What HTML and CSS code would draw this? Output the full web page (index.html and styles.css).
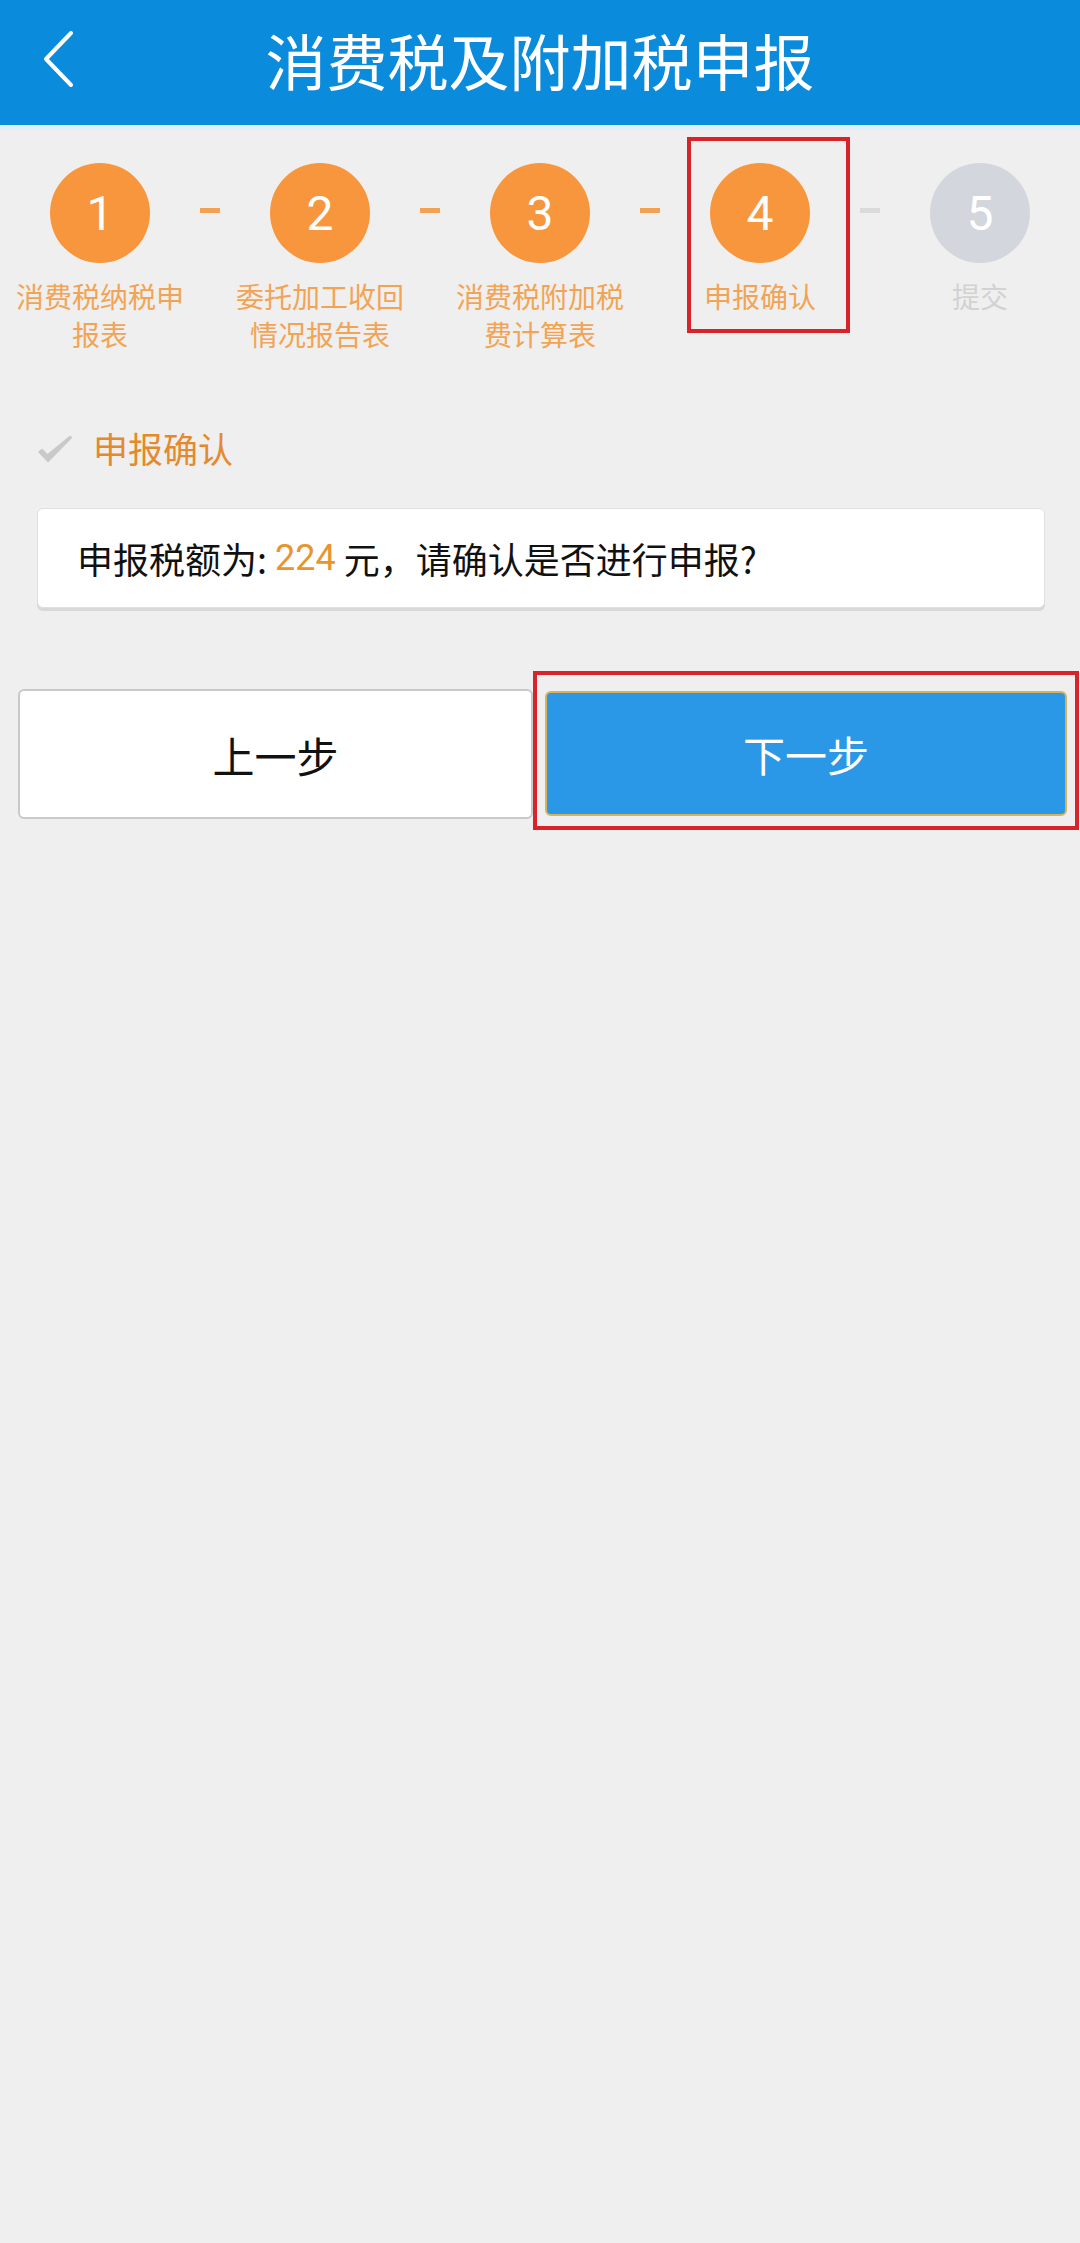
FILE: index.html
```html
<!DOCTYPE html>
<html lang="zh-CN">
<head>
<meta charset="utf-8">
<title>消费税及附加税申报</title>
<link rel="stylesheet" href="styles.css">
</head>
<body>
<header class="topbar">
  <div class="back">
    <svg width="32" height="58" viewBox="0 0 32 58"><polyline points="28,3 3,29 28,55" fill="none" stroke="#fff" stroke-width="4" stroke-linecap="round" stroke-linejoin="round"/></svg>
  </div>
  <h1 class="title">消费税及附加税申报</h1>
  <div></div>
</header>

<section class="steps">
  <div class="step done">
    <div class="circle">1</div>
    <div class="label">消费税纳税申报表</div>
  </div>
  <div class="dash done"></div>
  <div class="step done">
    <div class="circle">2</div>
    <div class="label">委托加工收回情况报告表</div>
  </div>
  <div class="dash done"></div>
  <div class="step done">
    <div class="circle">3</div>
    <div class="label">消费税附加税费计算表</div>
  </div>
  <div class="dash done"></div>
  <div class="step done current">
    <div class="circle">4</div>
    <div class="label">申报确认</div>
  </div>
  <div class="dash"></div>
  <div class="step">
    <div class="circle">5</div>
    <div class="label">提交</div>
  </div>
</section>

<div class="section-title">
  <svg class="check" width="36" height="28" viewBox="0 0 36 28"><path d="M1 17 L5 13.5 L10.5 19 L33 0.5 L35.5 2.5 L11 27.5 Z" fill="#c9c9c9"/></svg>
  <span>申报确认</span>
</div>

<div class="card">申报税额为: <span class="amount">224</span> 元，请确认是否进行申报?</div>

<div class="actions">
  <button class="btn prev">上一步</button>
  <div class="highlight">
    <button class="btn next">下一步</button>
  </div>
</div>
</body>
</html>
```

FILE: styles.css
```css
* { box-sizing: border-box; }
html, body { margin: 0; padding: 0; }
body {
  width: 1080px;
  min-height: 2243px;
  background: #efefef;
  font-family: "Noto Sans CJK SC", "Noto Sans", sans-serif;
}

.topbar {
  height: 130px;
  background: #0b8bdb;
  border-bottom: 5px solid #dcf0fb;
  display: grid;
  grid-template-columns: 1fr auto 1fr;
  align-items: center;
}
.back {
  padding-left: 43px;
  display: flex;
  align-items: center;
  height: 100%;
  padding-bottom: 8px;
}
.title {
  margin: 0;
  color: #fff;
  font-size: 61px;
  font-weight: 400;
  line-height: 1;
  padding-bottom: 6px;
}

.steps {
  display: flex;
  align-items: flex-start;
  padding-top: 33px;
}
.step {
  width: 200px;
  flex: none;
  display: flex;
  flex-direction: column;
  align-items: center;
  position: relative;
}
.circle {
  width: 100px;
  height: 100px;
  border-radius: 50%;
  background: #d3d6dc;
  color: #fff;
  font-family: Roboto, "Noto Sans", sans-serif;
  font-size: 48px;
  display: flex;
  align-items: center;
  justify-content: center;
}
.step.done .circle { background: #f7963c; }
.label {
  margin-top: 14px;
  width: 172px;
  text-align: center;
  font-size: 28px;
  line-height: 38px;
  color: #d2d2d2;
}
.step.done .label { color: #f2a454; }
.dash {
  flex: 1;
  height: 5px;
  margin-top: 45px;
  background: #dadada;
}
.dash.done { background: #f3a251; }
.step.current::after {
  content: "";
  box-sizing: border-box;
  position: absolute;
  left: 27px;
  top: -26px;
  width: 163px;
  height: 196px;
  border: 4px solid #d8232a;
}

.section-title {
  display: flex;
  align-items: center;
  gap: 20px;
  padding-left: 37px;
  margin-top: 70px;
  height: 50px;
}
.section-title span {
  font-size: 35px;
  color: #e4892d;
  line-height: 50px;
}
.check { margin-top: 2px; }

.card {
  margin: 35px 35px 0 37px;
  height: 100px;
  background: #fff;
  border: 1px solid #e0e0e0;
  border-radius: 6px;
  box-shadow: 0 3px 0 #d8d8d8;
  padding-left: 39px;
  display: flex;
  align-items: center;
  font-size: 36px;
  color: #111;
  white-space: pre;
}
.amount { color: #e8952f; font-family: Roboto, "Noto Sans CJK SC", sans-serif; }

.actions {
  display: flex;
  align-items: flex-start;
  padding-left: 18px;
  margin-top: 63px;
}
.btn {
  font-family: "Noto Sans CJK SC", "Noto Sans", sans-serif;
  font-size: 42px;
  border-radius: 6px;
  padding: 0;
  display: flex;
  align-items: center;
  justify-content: center;
}
.prev {
  width: 515px;
  height: 130px;
  margin-top: 18px;
  background: #fff;
  color: #111;
  border: 2px solid #c9c9c9;
}
.highlight {
  width: 546px;
  height: 159px;
  border: 4px solid #d8232a;
  padding: 16px 8px 10px 8px;
}
.next {
  width: 100%;
  height: 125px;
  background: #2b98e7;
  color: #fff;
  border: 2px solid #d7b35c;
}
```
